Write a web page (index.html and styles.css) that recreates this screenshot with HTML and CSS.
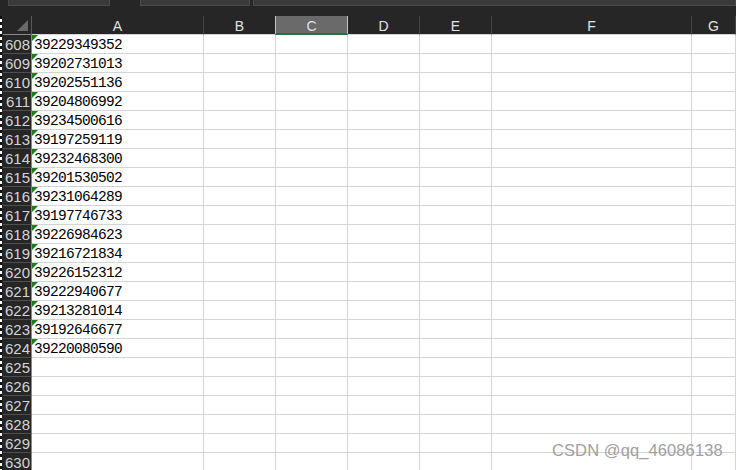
FILE: index.html
```html
<!DOCTYPE html>
<html lang="en">
<head>
    <meta charset="UTF-8">
    <title>Sheet1</title>
    <link rel="stylesheet" href="styles.css">
</head>
<body>

<!-- Ribbon remains -->
<div class="topbar">
    <div class="tab tab-one"></div>
    <div class="tab tab-two"></div>
    <div class="tab tab-three"></div>
</div>

<div class="workspace">
    <div class="marquee"></div>

    <div class="sheet">
        <!-- Column headers -->
        <div class="row head">
            <div class="corner"><span class="corner-mark"></span></div>
            <div class="col">A</div>
            <div class="col">B</div>
            <div class="col selected">C</div>
            <div class="col">D</div>
            <div class="col">E</div>
            <div class="col">F</div>
            <div class="col">G</div>
        </div>

        <div class="row"><div class="rh">608</div><div class="cell txt">39229349352</div><div class="cell"></div><div class="cell"></div><div class="cell"></div><div class="cell"></div><div class="cell"></div><div class="cell"></div></div>
        <div class="row"><div class="rh">609</div><div class="cell txt">39202731013</div><div class="cell"></div><div class="cell"></div><div class="cell"></div><div class="cell"></div><div class="cell"></div><div class="cell"></div></div>
        <div class="row"><div class="rh">610</div><div class="cell txt">39202551136</div><div class="cell"></div><div class="cell"></div><div class="cell"></div><div class="cell"></div><div class="cell"></div><div class="cell"></div></div>
        <div class="row"><div class="rh">611</div><div class="cell txt">39204806992</div><div class="cell"></div><div class="cell"></div><div class="cell"></div><div class="cell"></div><div class="cell"></div><div class="cell"></div></div>
        <div class="row"><div class="rh">612</div><div class="cell txt">39234500616</div><div class="cell"></div><div class="cell"></div><div class="cell"></div><div class="cell"></div><div class="cell"></div><div class="cell"></div></div>
        <div class="row"><div class="rh">613</div><div class="cell txt">39197259119</div><div class="cell"></div><div class="cell"></div><div class="cell"></div><div class="cell"></div><div class="cell"></div><div class="cell"></div></div>
        <div class="row"><div class="rh">614</div><div class="cell txt">39232468300</div><div class="cell"></div><div class="cell"></div><div class="cell"></div><div class="cell"></div><div class="cell"></div><div class="cell"></div></div>
        <div class="row"><div class="rh">615</div><div class="cell txt">39201530502</div><div class="cell"></div><div class="cell"></div><div class="cell"></div><div class="cell"></div><div class="cell"></div><div class="cell"></div></div>
        <div class="row"><div class="rh">616</div><div class="cell txt">39231064289</div><div class="cell"></div><div class="cell"></div><div class="cell"></div><div class="cell"></div><div class="cell"></div><div class="cell"></div></div>
        <div class="row"><div class="rh">617</div><div class="cell txt">39197746733</div><div class="cell"></div><div class="cell"></div><div class="cell"></div><div class="cell"></div><div class="cell"></div><div class="cell"></div></div>
        <div class="row"><div class="rh">618</div><div class="cell txt">39226984623</div><div class="cell"></div><div class="cell"></div><div class="cell"></div><div class="cell"></div><div class="cell"></div><div class="cell"></div></div>
        <div class="row"><div class="rh">619</div><div class="cell txt">39216721834</div><div class="cell"></div><div class="cell"></div><div class="cell"></div><div class="cell"></div><div class="cell"></div><div class="cell"></div></div>
        <div class="row"><div class="rh">620</div><div class="cell txt">39226152312</div><div class="cell"></div><div class="cell"></div><div class="cell"></div><div class="cell"></div><div class="cell"></div><div class="cell"></div></div>
        <div class="row"><div class="rh">621</div><div class="cell txt">39222940677</div><div class="cell"></div><div class="cell"></div><div class="cell"></div><div class="cell"></div><div class="cell"></div><div class="cell"></div></div>
        <div class="row"><div class="rh">622</div><div class="cell txt">39213281014</div><div class="cell"></div><div class="cell"></div><div class="cell"></div><div class="cell"></div><div class="cell"></div><div class="cell"></div></div>
        <div class="row"><div class="rh">623</div><div class="cell txt">39192646677</div><div class="cell"></div><div class="cell"></div><div class="cell"></div><div class="cell"></div><div class="cell"></div><div class="cell"></div></div>
        <div class="row"><div class="rh">624</div><div class="cell txt">39220080590</div><div class="cell"></div><div class="cell"></div><div class="cell"></div><div class="cell"></div><div class="cell"></div><div class="cell"></div></div>
        <div class="row"><div class="rh">625</div><div class="cell"></div><div class="cell"></div><div class="cell"></div><div class="cell"></div><div class="cell"></div><div class="cell"></div><div class="cell"></div></div>
        <div class="row"><div class="rh">626</div><div class="cell"></div><div class="cell"></div><div class="cell"></div><div class="cell"></div><div class="cell"></div><div class="cell"></div><div class="cell"></div></div>
        <div class="row"><div class="rh">627</div><div class="cell"></div><div class="cell"></div><div class="cell"></div><div class="cell"></div><div class="cell"></div><div class="cell"></div><div class="cell"></div></div>
        <div class="row"><div class="rh">628</div><div class="cell"></div><div class="cell"></div><div class="cell"></div><div class="cell"></div><div class="cell"></div><div class="cell"></div><div class="cell"></div></div>
        <div class="row"><div class="rh">629</div><div class="cell"></div><div class="cell"></div><div class="cell"></div><div class="cell"></div><div class="cell"></div><div class="cell"></div><div class="cell"></div></div>
        <div class="row"><div class="rh">630</div><div class="cell"></div><div class="cell"></div><div class="cell"></div><div class="cell"></div><div class="cell"></div><div class="cell"></div><div class="cell"></div></div>
    </div>
</div>

<div class="watermark">CSDN @qq_46086138</div>

</body>
</html>
```

FILE: styles.css
```css
* {
    margin: 0;
    padding: 0;
    box-sizing: border-box;
}
html, body {
    width: 736px;
    height: 470px;
    overflow: hidden;
}
body {
    background-color: #262626;
    font-family: 'Liberation Sans', Arial, sans-serif;
    position: relative;
}
.topbar {
    height: 16px;
    display: flex;
    align-items: flex-start;
}
.tab {
    height: 6px;
    background-color: #3a3a3a;
    border: 1px solid #4a4a4a;
    border-top: none;
}
.tab-one {
    width: 102px;
    margin-left: 8px;
}
.tab-two {
    width: 110px;
    margin-left: 30px;
}
.tab-three {
    flex: 1;
    margin-left: 3px;
}
.workspace {
    display: flex;
}
.marquee {
    width: 3px;
    height: 454px;
    background: repeating-linear-gradient(to bottom, #111 0 3px, #fff 3px 6px);
    border-right: 1px solid #262626;
}
.sheet {
    flex: 1;
}
.row {
    display: grid;
    grid-template-columns: 29px 172px 72px 72px 72px 72px 200px 1fr;
    grid-template-rows: 19px;
    height: 19px;
}
/* header row */
.head {
    background-color: #262626;
}
.corner {
    position: relative;
    border-right: 1px solid #5a5a5a;
    border-bottom: 1px solid #8a8a8a;
}
.corner-mark {
    position: absolute;
    right: 3px;
    bottom: 3px;
    width: 0;
    height: 0;
    border-left: 11px solid transparent;
    border-bottom: 11px solid #6a6a6a;
}
.col {
    color: #e2e2e2;
    font-size: 14px;
    text-align: center;
    line-height: 18px;
    padding-top: 1px;
    border-right: 1px solid #454545;
    border-bottom: 1px solid #d4d4d4;
}
.col.selected {
    background-color: #6a6a6a;
    border-left: 1px solid #c4c4c4;
    border-right: 1px solid #c4c4c4;
    border-bottom: 2px solid #217346;
    margin-left: -1px;
}
/* body rows */
.rh {
    background-color: #262626;
    color: #d4d4d4;
    font-size: 15px;
    line-height: 18px;
    padding-top: 1px;
    text-align: right;
    padding-right: 1px;
    border-right: 1px solid #8a8a8a;
    border-bottom: 1px solid #4e4e4e;
    overflow: hidden;
}
.cell {
    background-color: #fff;
    border-right: 1px solid #d4d4d4;
    border-bottom: 1px solid #d4d4d4;
}
.txt {
    position: relative;
    font-family: 'Liberation Mono', monospace;
    font-size: 14.5px;
    letter-spacing: -0.7px;
    line-height: 18px;
    padding-top: 1px;
    color: #000;
    padding-left: 2px;
}
.txt::before {
    content: '';
    position: absolute;
    top: 0;
    left: 0;
    border-top: 6px solid #1c7d1c;
    border-right: 6px solid transparent;
}
.watermark {
    position: absolute;
    left: 552px;
    top: 441px;
    font-size: 16.5px;
    color: #a0a0a0;
    letter-spacing: 0.1px;
}
```
